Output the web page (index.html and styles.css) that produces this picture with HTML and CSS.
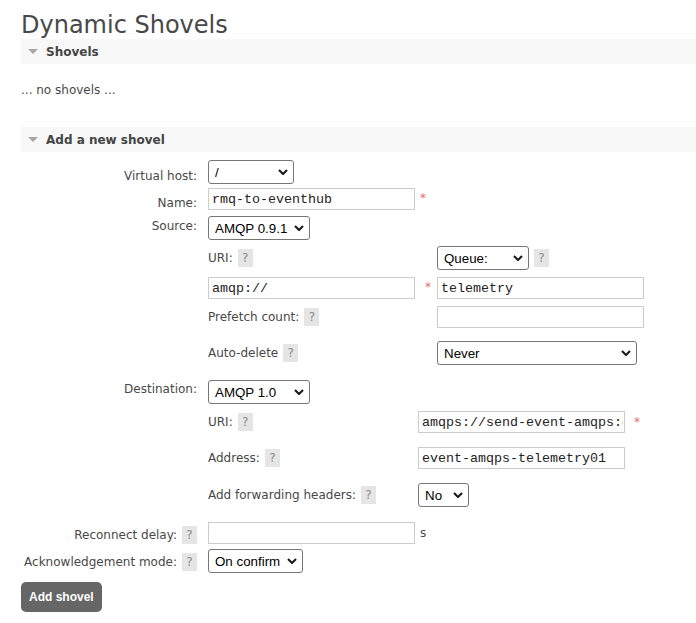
FILE: index.html
```html
<!DOCTYPE html>
<html>
<head>
<meta charset="utf-8">
<title>Dynamic Shovels</title>
<link rel="stylesheet" href="styles.css">
</head>
<body>
<div class="page">
  <h1 class="title">Dynamic Shovels</h1>

  <section class="section">
    <h2 class="section-head"><span class="tri"></span>Shovels</h2>
    <p class="empty">... no shovels ...</p>
  </section>

  <section class="section">
    <h2 class="section-head"><span class="tri"></span>Add a new shovel</h2>
    <form class="form">
      <div class="row r-vhost">
        <label class="lbl">Virtual host:</label>
        <div class="ctl">
          <span class="sel w-vhost"><select><option>/</option></select><svg class="chev" viewBox="0 0 10 6"><path d="M1 1 L5 5 L9 1"/></svg></span>
        </div>
      </div>

      <div class="row r-name">
        <label class="lbl">Name:</label>
        <div class="ctl">
          <input class="txt" type="text" value="rmq-to-eventhub"><span class="req req-name">*</span>
        </div>
      </div>

      <div class="row r-source">
        <label class="lbl">Source:</label>
        <div class="ctl">
          <span class="sel w-proto"><select><option>AMQP 0.9.1</option><option>AMQP 1.0</option></select><svg class="chev" viewBox="0 0 10 6"><path d="M1 1 L5 5 L9 1"/></svg></span>
          <div class="sub sub-src">
            <div class="srow s-uri">
              <span class="sl">URI:<span class="help">?</span></span>
              <span class="sc"><span class="sel w-queue"><select><option>Queue:</option><option>Exchange:</option></select><svg class="chev" viewBox="0 0 10 6"><path d="M1 1 L5 5 L9 1"/></svg></span><span class="help">?</span></span>
            </div>
            <div class="srow s-inputs">
              <span class="sl"><input class="txt" type="text" value="amqp://"><span class="req req-src">*</span></span>
              <span class="sc"><input class="txt" type="text" value="telemetry"></span>
            </div>
            <div class="srow s-prefetch">
              <span class="sl">Prefetch count:<span class="help">?</span></span>
              <span class="sc"><input class="txt" type="text" value=""></span>
            </div>
            <div class="srow s-autodel">
              <span class="sl">Auto-delete<span class="help">?</span></span>
              <span class="sc"><span class="sel w-never"><select><option>Never</option><option>After initial length transferred</option></select><svg class="chev" viewBox="0 0 10 6"><path d="M1 1 L5 5 L9 1"/></svg></span></span>
            </div>
          </div>
        </div>
      </div>

      <div class="row r-dest">
        <label class="lbl">Destination:</label>
        <div class="ctl">
          <span class="sel w-proto"><select><option>AMQP 1.0</option><option>AMQP 0.9.1</option></select><svg class="chev" viewBox="0 0 10 6"><path d="M1 1 L5 5 L9 1"/></svg></span>
          <div class="sub sub-dst">
            <div class="srow d-uri">
              <span class="sl">URI:<span class="help">?</span></span>
              <span class="sc"><input class="txt txt-clip" type="text" value="amqps://send-event-amqps:c2VjcmV0@eventhubs-ns.servicebus.windows.net:5671"><span class="req req-dst">*</span></span>
            </div>
            <div class="srow d-addr">
              <span class="sl">Address:<span class="help">?</span></span>
              <span class="sc"><input class="txt" type="text" value="event-amqps-telemetry01"></span>
            </div>
            <div class="srow d-fwd">
              <span class="sl">Add forwarding headers:<span class="help">?</span></span>
              <span class="sc"><span class="sel w-no"><select><option>No</option><option>Yes</option></select><svg class="chev" viewBox="0 0 10 6"><path d="M1 1 L5 5 L9 1"/></svg></span></span>
            </div>
          </div>
        </div>
      </div>

      <div class="row r-reconnect">
        <label class="lbl lbl-help">Reconnect delay:<span class="help">?</span></label>
        <div class="ctl ctl-inline">
          <input class="txt" type="text" value=""><span class="unit">s</span>
        </div>
      </div>

      <div class="row r-ack">
        <label class="lbl lbl-help">Acknowledgement mode:<span class="help">?</span></label>
        <div class="ctl">
          <span class="sel w-ack"><select><option>On confirm</option><option>On publish</option><option>No ack</option></select><svg class="chev" viewBox="0 0 10 6"><path d="M1 1 L5 5 L9 1"/></svg></span>
        </div>
      </div>

      <button class="btn" type="button">Add shovel</button>
    </form>
  </section>
</div>
</body>
</html>
```

FILE: styles.css
```css
* {
  box-sizing: border-box;
}

body {
  margin: 0;
  font: 12px/14px "DejaVu Sans", Verdana, sans-serif;
  color: #484848;
  background: #fff;
}

.page {
  padding: 11px 0 0 21px;
}

.title {
  margin: 0;
  font-size: 24px;
  line-height: 28px;
  font-weight: normal;
  color: #484848;
}

.section-head {
  margin: 0;
  height: 25px;
  display: flex;
  align-items: center;
  padding-left: 7px;
  background: #f8f8f8;
  font-size: 12px;
  line-height: 14px;
  font-weight: bold;
  color: #444;
}

.tri {
  width: 0;
  height: 0;
  border-left: 5px solid transparent;
  border-right: 5px solid transparent;
  border-top: 5px solid #a6a6a6;
  margin-right: 8px;
}

.empty {
  margin: 19px 0 30px;
}

.form {
  display: block;
  margin: 8px 0 0;
}

.row {
  display: grid;
  grid-template-columns: 176px 1fr;
  column-gap: 11px;
  align-items: start;
}

.lbl {
  display: block;
  text-align: right;
}

.lbl-help {
  display: flex;
  justify-content: flex-end;
  align-items: center;
  gap: 5px;
  padding-top: 4px;
}

.ctl {
  display: flex;
  flex-direction: column;
  align-items: flex-start;
}

.ctl-inline,
.r-name .ctl {
  flex-direction: row;
  align-items: center;
}

.r-name .ctl {
  align-items: flex-start;
}

.r-vhost .lbl { padding-top: 9px; }
.r-name { margin-top: 4px; }
.r-name .lbl { padding-top: 8px; }
.r-source { margin-top: 6px; }
.r-source .lbl { padding-top: 3px; }
.r-dest { margin-top: 15px; }
.r-dest .lbl { padding-top: 2px; }
.r-reconnect { margin-top: 15px; }
.r-ack { margin-top: 5px; }

/* text inputs */
.txt {
  width: 207px;
  height: 22px;
  margin: 0;
  border: 1px solid #cccccc;
  padding: 0 3px;
  background: #fff;
  font: 13.33px "Liberation Mono", "Courier New", monospace;
  color: #222;
  outline: none;
}

.txt-clip {
  padding-right: 1px;
}

/* selects */
.sel {
  position: relative;
  display: inline-block;
  height: 24px;
}

.sel select {
  appearance: none;
  -webkit-appearance: none;
  width: 100%;
  height: 24px;
  margin: 0;
  border: 1px solid #767676;
  border-radius: 3px;
  padding: 0 20px 0 6px;
  background: #fff;
  font: 13.33px "Liberation Sans", Arial, sans-serif;
  color: #000;
  outline: none;
}

.chev {
  position: absolute;
  right: 6px;
  top: 9px;
  width: 10px;
  height: 6px;
  pointer-events: none;
  fill: none;
  stroke: #1a1a1a;
  stroke-width: 2.1;
}

.w-vhost { width: 86px; }
.w-proto { width: 102px; }
.w-queue { width: 92px; }
.w-never { width: 200px; }
.w-no { width: 51px; }
.w-ack { width: 95px; }

/* help badge */
.help {
  display: inline-flex;
  align-items: center;
  justify-content: center;
  width: 15px;
  height: 18px;
  background: #e5e5e5;
  color: #8a8a8a;
  font-size: 12px;
  line-height: 14px;
  flex: none;
}

.req {
  align-self: flex-start;
  color: #ea6f6f;
  font-size: 12px;
  line-height: 14px;
}

.req-name { margin: 3px 0 0 5px; }
.req-src { margin: 3px 0 0 10px; }
.req-dst { margin: 4px 0 0 9px; }

.unit {
  margin-left: 5px;
}

/* nested source / destination grids */
.sub {
  display: block;
}

.srow {
  display: grid;
  align-items: center;
}

.sub-src .srow { grid-template-columns: 229px auto; }
.sub-dst .srow { grid-template-columns: 210px auto; }

.sl,
.sc {
  display: flex;
  align-items: center;
  gap: 5px;
}

.sl .req { gap: 0; }

.s-inputs .sl { gap: 0; align-items: flex-start; }
.d-uri .sc { gap: 0; align-items: flex-start; }

.s-uri { margin-top: 6px; height: 24px; }
.s-inputs { margin-top: 7px; height: 22px; }
.s-prefetch { margin-top: 7px; height: 22px; }
.s-autodel { margin-top: 13px; height: 24px; }

.d-uri { margin-top: 7px; height: 22px; }
.d-addr { margin-top: 14px; height: 22px; }
.d-fwd { margin-top: 14px; height: 24px; }

/* submit button */
.btn {
  display: block;
  margin: 9px 0 0;
  height: 30px;
  padding: 0 8px;
  border: none;
  border-radius: 5px;
  background: #666;
  color: #fff;
  font: bold 12px "Liberation Sans", Arial, sans-serif;
  cursor: pointer;
}
```
